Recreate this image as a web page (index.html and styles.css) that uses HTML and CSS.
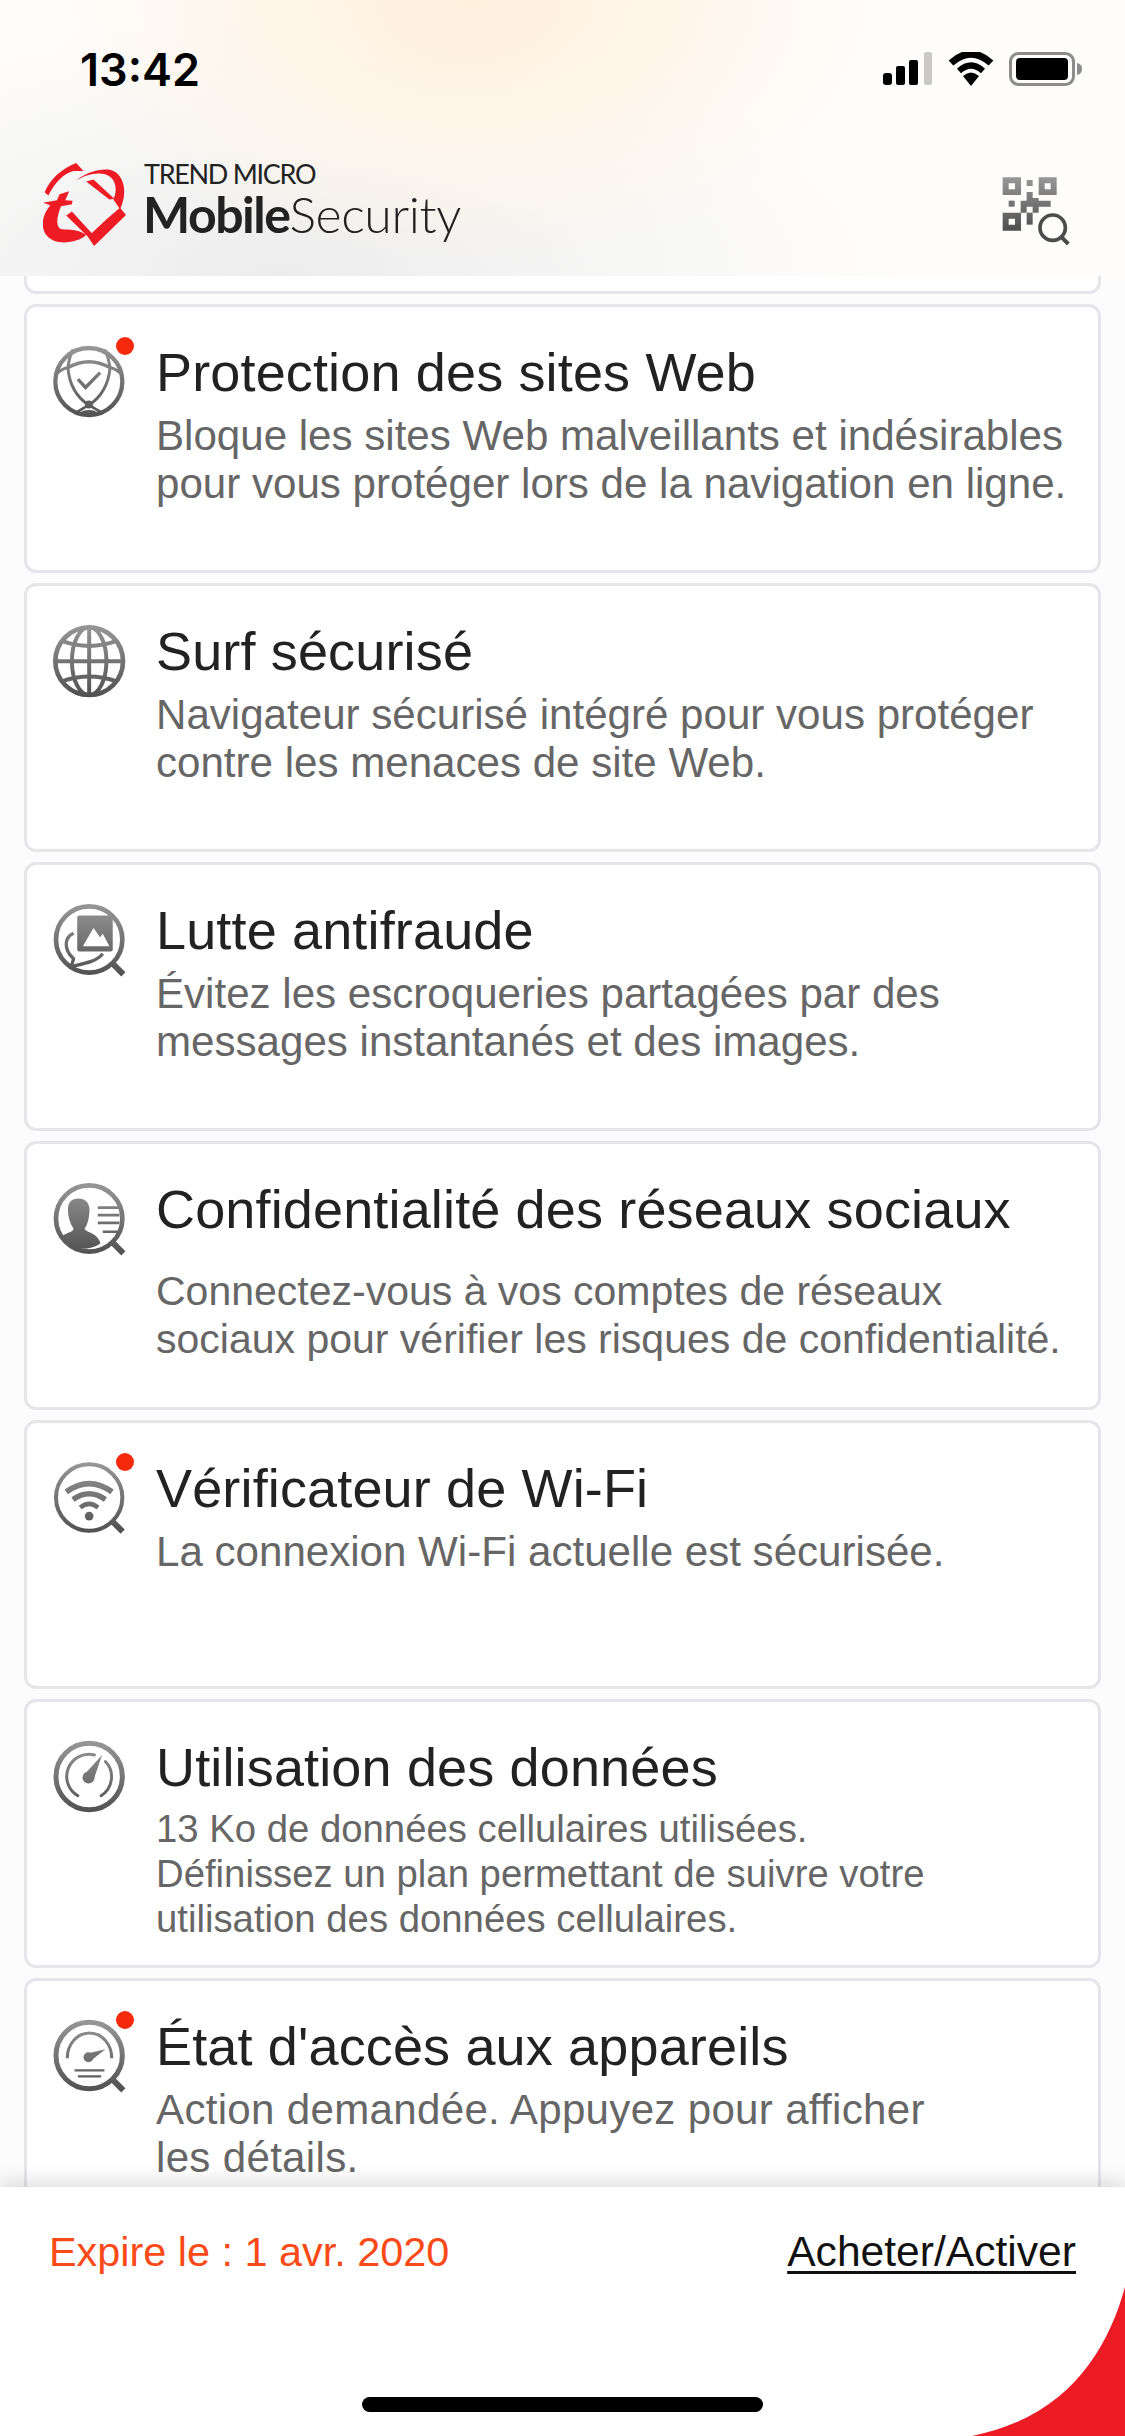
FILE: index.html
```html
<!DOCTYPE html>
<html lang="fr">
<head>
  <meta charset="UTF-8">
  <title>Trend Micro Mobile Security</title>
  <link rel="stylesheet" href="styles.css">
</head>
<body>
  <svg class="defs" width="0" height="0">
    <defs>
      <linearGradient id="gris" gradientUnits="userSpaceOnUse" x1="0" y1="0" x2="0" y2="220">
        <stop offset="0" stop-color="#979797"/>
        <stop offset="1" stop-color="#4f4f4f"/>
      </linearGradient>
    </defs>
  </svg>

  <header class="entete">
    <div class="statut">
      <span class="heure">13:42</span>
      <div class="statut-icones">
        <svg width="50" height="34" viewBox="0 0 50 34">
          <rect x="0" y="21" width="9" height="12" rx="3"/>
          <rect x="13" y="14" width="9" height="19" rx="2"/>
          <rect x="26" y="8" width="9" height="25" rx="2"/>
          <rect x="41" y="0" width="8" height="33" rx="2" fill="#c9c9c9"/>
        </svg>
        <svg width="46" height="34" viewBox="0 0 46 34">
          <path d="M3 11 Q23 -7 43 11" fill="none" stroke="#000" stroke-width="7"/>
          <path d="M11 19 Q23 8 35 19" fill="none" stroke="#000" stroke-width="6"/>
          <path d="M15 24 Q23 17 31 24 L23 34 Z"/>
        </svg>
        <svg width="73" height="34" viewBox="0 0 73 34">
          <rect x="1.5" y="1.5" width="63" height="31" rx="8" fill="none" stroke="#8c8c8c" stroke-width="3"/>
          <rect x="7" y="6" width="52" height="22" rx="4"/>
          <path d="M68 11 Q73 12 73 17 Q73 22 68 23 Z" fill="#8c8c8c"/>
        </svg>
      </div>
    </div>
    <div class="marque">
      <div class="logo-groupe">
        <svg class="logo" viewBox="68 68 250 250">
          <g fill="#ed1c24">
            <path d="M168 68 L190 92 L160 92 C130 100 105 125 84 166 L73 156 C90 115 125 85 168 68 Z"/>
            <path d="M165 122 C200 95 250 80 280 92 C310 105 325 155 300 207 L280 178 C295 145 285 110 255 102 C225 95 195 105 165 122 Z"/>
            <path d="M198 124 L220 118 L283 176 L268 178 Z"/>
            <path d="M300 203 L318 225 L222 318 L203 290 L262 235 Z"/>
            <path d="M68 188 L110 180 L118 162 L147 153 L135 180 L157 182 L155 192 L122 198 C112 225 105 250 118 265 C135 272 165 262 198 284 L190 292 C155 312 100 315 78 285 C60 260 65 225 90 195 Z"/>
            <path d="M138 226 L155 214 L217 282 L205 292 Z"/>
          </g>
        </svg>
        <div class="logo-texte">
          <span class="logo-haut">TREND MICRO</span>
          <span class="logo-bas"><b>Mobile</b>Security</span>
        </div>
      </div>
      <svg class="qr" viewBox="70 78 210 210">
        <g fill="url(#grisqr)">
          <path fill-rule="evenodd" d="M75 82H130V135H75Z M93 100V118H112V100Z"/>
          <path fill-rule="evenodd" d="M183 82H237V135H183Z M201 100V118H219V100Z"/>
          <path fill-rule="evenodd" d="M75 188H130V242H75Z M93 206V224H112V206Z"/>
          <rect x="147" y="90" width="18" height="18"/>
          <rect x="93" y="152" width="18" height="18"/>
          <path d="M147 126H165V144H183V152H219V170H183V188H165V170H147V188H129V152H147Z"/>
          <rect x="147" y="188" width="18" height="36"/>
        </g>
        <circle cx="225" cy="233" r="38" fill="none" stroke="#4c4c4c" stroke-width="11"/>
        <path d="M250 260 L272 282" stroke="#4c4c4c" stroke-width="12"/>
        <defs>
          <linearGradient id="grisqr" gradientUnits="userSpaceOnUse" x1="0" y1="82" x2="0" y2="242">
            <stop offset="0" stop-color="#979797"/>
            <stop offset="1" stop-color="#4f4f4f"/>
          </linearGradient>
        </defs>
      </svg>
    </div>
  </header>

  <main class="liste">
    <div class="carte-bout"></div>

    <section class="carte">
      <div class="icone">
        <svg viewBox="0 0 220 220">
          <g class="trait">
            <circle cx="108" cy="107" r="101" stroke-width="13"/>
            <path d="M45 65 C50 130 80 160 108 178 C136 160 166 130 172 65" stroke-width="9"/>
            <path d="M45 65 Q108 30 172 65" stroke-width="10"/>
            <path d="M60 10 Q48 35 45 65 M156 10 Q168 35 172 65 M8 88 Q22 70 45 65 M208 88 Q194 70 172 65" stroke-width="9"/>
            <path d="M75 100 L98 125 L142 80" stroke-width="10"/>
            <path d="M70 200 L108 178 L146 200 M82 204 Q108 190 134 204" stroke-width="8"/>
          </g>
          <circle class="plein" cx="108" cy="176" r="12"/>
        </svg>
        <span class="point"></span>
      </div>
      <div class="texte">
        <h2>Protection des sites Web</h2>
        <p>Bloque les sites Web malveillants et indésirables<br>pour vous protéger lors de la navigation en ligne.</p>
      </div>
    </section>

    <section class="carte">
      <div class="icone">
        <svg viewBox="0 0 220 220">
          <g class="trait">
            <circle cx="109" cy="109" r="102" stroke-width="14"/>
            <ellipse cx="109" cy="109" rx="52" ry="102" stroke-width="12"/>
            <path d="M109 7V211 M7 109H211" stroke-width="12"/>
            <path d="M26 48 Q109 78 192 48 M26 170 Q109 140 192 170" stroke-width="12"/>
          </g>
        </svg>
      </div>
      <div class="texte">
        <h2>Surf sécurisé</h2>
        <p>Navigateur sécurisé intégré pour vous protéger<br>contre les menaces de site Web.</p>
      </div>
    </section>

    <section class="carte">
      <div class="icone">
        <svg viewBox="0 0 220 220">
          <g class="trait">
            <circle cx="109" cy="107" r="100" stroke-width="14"/>
            <path d="M180 180 L212 212" stroke-width="18"/>
            <path d="M62 88 C35 100 30 135 62 165 L55 188 C90 180 130 175 150 150" stroke-width="10"/>
          </g>
          <rect class="plein" x="73" y="35" width="107" height="108" rx="6"/>
          <path d="M90 127 L122 72 L142 100 L150 90 L170 127 Z" fill="#fff"/>
        </svg>
      </div>
      <div class="texte">
        <h2>Lutte antifraude</h2>
        <p>Évitez les escroqueries partagées par des<br>messages instantanés et des images.</p>
      </div>
    </section>

    <section class="carte carte-large">
      <div class="icone">
        <svg viewBox="0 0 220 220">
          <g class="trait">
            <circle cx="109" cy="107" r="100" stroke-width="14"/>
            <path d="M180 180 L212 212" stroke-width="18"/>
            <path d="M135 74H200 M135 97H200 M135 120H200 M150 147H197" stroke-width="8"/>
          </g>
          <path class="plein" d="M22 165 C35 150 60 150 62 138 C50 120 45 100 45 80 C45 55 60 47 78 47 C96 47 110 60 110 80 C110 100 105 125 95 138 C100 150 135 150 143 182 C100 210 50 200 22 165 Z"/>
        </svg>
      </div>
      <div class="texte">
        <h2>Confidentialité des réseaux sociaux</h2>
        <p>Connectez-vous à vos comptes de réseaux<br>sociaux pour vérifier les risques de confidentialité.</p>
      </div>
    </section>

    <section class="carte">
      <div class="icone">
        <svg viewBox="0 0 220 220">
          <g class="trait">
            <circle cx="109" cy="107" r="100" stroke-width="12"/>
            <path d="M182 182 L210 210" stroke-width="18"/>
            <path d="M40 90 Q109 40 178 90" stroke-width="17"/>
            <path d="M60 113 Q109 78 158 113" stroke-width="16"/>
            <path d="M82 137 Q109 115 136 137" stroke-width="14"/>
          </g>
          <circle class="plein" cx="109" cy="163" r="13"/>
        </svg>
        <span class="point"></span>
      </div>
      <div class="texte">
        <h2>Vérificateur de Wi-Fi</h2>
        <p>La connexion Wi-Fi actuelle est sécurisée.</p>
      </div>
    </section>

    <section class="carte carte-petite">
      <div class="icone">
        <svg viewBox="0 0 220 220">
          <g class="trait">
            <circle cx="109" cy="107" r="100" stroke-width="15"/>
            <path d="M75 165 A67 67 0 0 1 125 42 M158 62 A67 67 0 0 1 145 165" stroke-width="9" stroke-linecap="round"/>
          </g>
          <circle class="plein" cx="107" cy="110" r="18"/>
          <path class="plein" d="M95 100 L148 42 L122 118 Z"/>
        </svg>
      </div>
      <div class="texte">
        <h2>Utilisation des données</h2>
        <p>13 Ko de données cellulaires utilisées.<br>Définissez un plan permettant de suivre votre<br>utilisation des données cellulaires.</p>
      </div>
    </section>

    <section class="carte carte-etat">
      <div class="icone">
        <svg viewBox="0 0 220 220">
          <g class="trait">
            <circle cx="109" cy="107" r="100" stroke-width="15"/>
            <path d="M182 182 L212 212" stroke-width="18"/>
            <path d="M43 115 A66 75 0 0 1 177 115" stroke-width="9"/>
            <path d="M65 152H155 M75 170H145" stroke-width="7"/>
          </g>
          <circle class="plein" cx="107" cy="112" r="15"/>
          <path class="plein" d="M100 102 L158 88 L112 124 Z"/>
        </svg>
        <span class="point"></span>
      </div>
      <div class="texte">
        <h2>État d'accès aux appareils</h2>
        <p>Action demandée. Appuyez pour afficher<br>les détails.</p>
      </div>
    </section>
  </main>

  <footer class="pied">
    <div class="pied-ligne">
      <span class="expire">Expire le : 1 avr. 2020</span>
      <a class="acheter" href="#">Acheter/Activer</a>
    </div>
    <div class="barre"></div>
    <svg class="coin" width="153" height="149" viewBox="0 0 153 149">
      <path d="M153 0 C135 65 95 130 0 149 L153 149 Z" fill="#ed1c24"/>
    </svg>
  </footer>
</body>
</html>
```

FILE: styles.css
```css
* {
  box-sizing: border-box;
}

html, body {
  margin: 0;
  padding: 0;
}

body {
  width: 1125px;
  height: 2436px;
  display: flex;
  flex-direction: column;
  overflow: hidden;
  font-family: "Liberation Sans", Arial, sans-serif;
  background-color: #fcfcfd;
  color: #222;
}

.defs {
  flex: none;
  display: block;
}

/* entete */
.entete {
  flex: none;
  height: 276px;
  padding-top: 52px;
  background:
    radial-gradient(ellipse 420px 260px at 470px 0, #fff0dd 0%, rgba(255, 244, 230, 0.75) 55%, rgba(255, 250, 245, 0) 100%),
    radial-gradient(ellipse 620px 260px at 280px 276px, #ececec 0%, rgba(240, 240, 240, 0.5) 55%, rgba(255, 255, 255, 0) 100%),
    #fefdfc;
}

.statut {
  display: flex;
  justify-content: space-between;
  align-items: center;
  height: 34px;
  padding: 0 43px 0 80px;
}

.heure {
  font-family: Inter, "Liberation Sans", sans-serif;
  font-size: 45px;
  font-weight: 600;
  color: #000;
}

.statut-icones {
  display: flex;
  align-items: center;
  gap: 15px;
}

.marque {
  display: flex;
  justify-content: space-between;
  align-items: flex-start;
  padding: 77px 54px 0 43px;
}

.logo-groupe {
  display: flex;
  gap: 18px;
}

.logo {
  width: 83px;
  height: 83px;
}

.logo-texte {
  display: flex;
  flex-direction: column;
  margin-top: -3px;
  color: #222;
  font-family: Lato, sans-serif;
}

.logo-haut {
  font-size: 27px;
  line-height: 27px;
  letter-spacing: -1.3px;
}

.logo-bas {
  font-size: 50px;
  line-height: 54px;
  font-weight: 300;
  letter-spacing: -0.4px;
  margin-left: -1px;
}

.logo-bas b {
  font-weight: 700;
  letter-spacing: -1.5px;
}

.qr {
  width: 70px;
  height: 70px;
  margin-top: 13px;
}

/* liste */
.liste {
  flex: 1;
  min-height: 0;
  overflow: hidden;
  display: flex;
  flex-direction: column;
  gap: 10px;
  padding: 0 24px;
}

.carte-bout {
  flex: none;
  height: 18px;
  background: #fff;
  border: 3px solid #e6e6ea;
  border-top: none;
  border-radius: 0 0 12px 12px;
}

.carte {
  flex: none;
  display: flex;
  gap: 30px;
  height: 269px;
  padding: 35px 20px 0 26px;
  background: #fff;
  border: 3px solid #e6e6ea;
  border-radius: 12px;
}

.icone {
  flex: none;
  position: relative;
  width: 73px;
  height: 73px;
  margin-top: 4px;
}

.icone svg {
  display: block;
  width: 73px;
  height: 73px;
  overflow: visible;
}

.trait {
  fill: none;
  stroke: url(#gris);
}

.plein {
  fill: url(#gris);
}

.point {
  position: absolute;
  top: -9px;
  left: 63px;
  width: 18px;
  height: 18px;
  border-radius: 50%;
  background-color: #f52a0c;
}

.texte h2 {
  margin: 0;
  font-size: 54px;
  font-weight: normal;
  letter-spacing: 0.15px;
  line-height: 60px;
  color: #222;
  white-space: nowrap;
}

.texte p {
  margin: 10px 0 0;
  font-size: 42.1px;
  line-height: 48px;
  color: #666;
  white-space: nowrap;
}

.carte-large .texte p {
  margin-top: 28px;
  font-size: 41px;
}

.carte-petite .texte p {
  margin-top: 9px;
  font-size: 38.3px;
  line-height: 45px;
}

.carte-etat .texte p {
  letter-spacing: 0.3px;
}

/* pied */
.pied {
  flex: none;
  position: relative;
  height: 249px;
  display: flex;
  flex-direction: column;
  padding-top: 41px;
  background: #fff;
  box-shadow: 0 -6px 18px rgba(0, 0, 0, 0.13);
}

.pied-ligne {
  display: flex;
  justify-content: space-between;
  align-items: baseline;
  padding: 0 49px;
  line-height: 47px;
}

.expire {
  font-size: 41.4px;
  color: #fb4a17;
}

.acheter {
  font-size: 42.6px;
  color: #111;
  text-decoration: underline;
  text-decoration-thickness: 3px;
  text-underline-offset: 5px;
}

.barre {
  width: 401px;
  height: 15px;
  margin: auto auto 24px;
  border-radius: 8px;
  background-color: #000;
}

.coin {
  position: absolute;
  right: 0;
  bottom: 0;
}
```
